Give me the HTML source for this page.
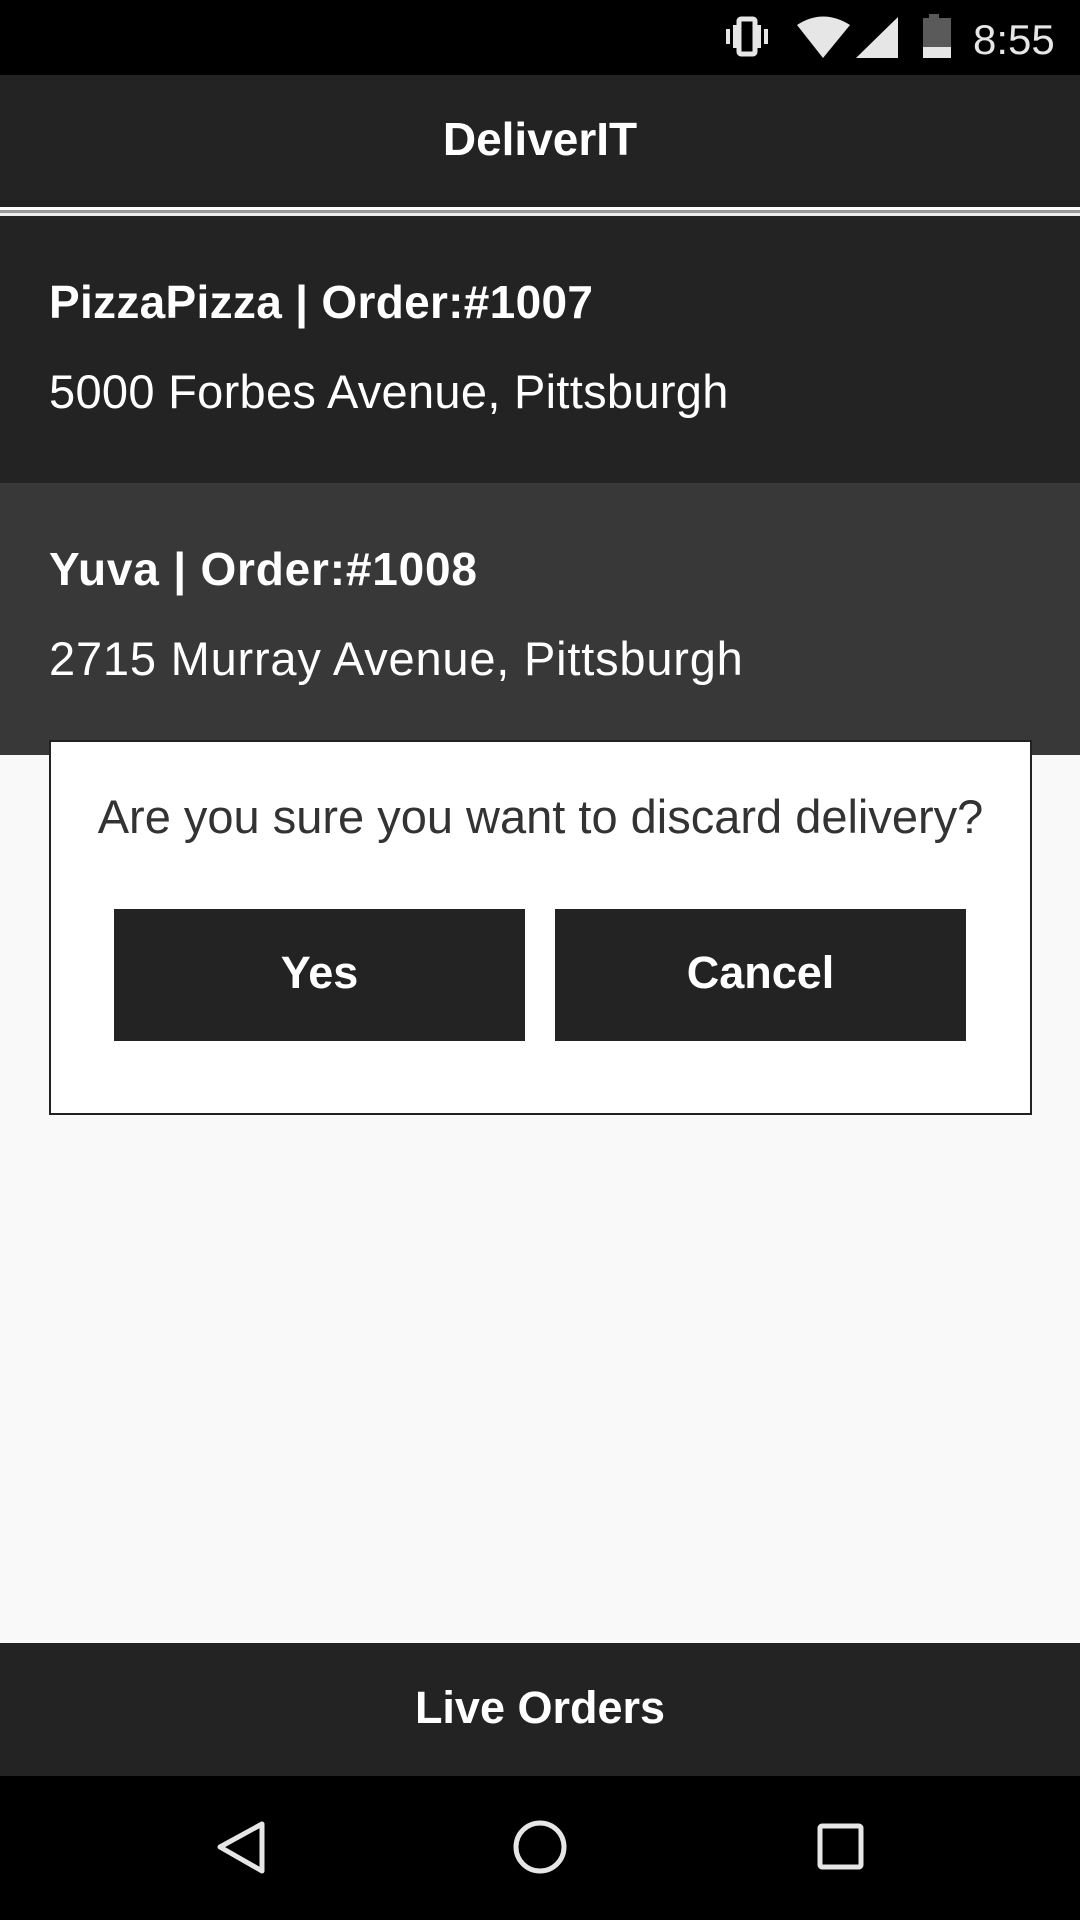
<!DOCTYPE html>
<html><head><style>
*{margin:0;padding:0;box-sizing:border-box}
body{width:1080px;height:1920px;background:#f9f9f9;font-family:"Liberation Sans",sans-serif;position:relative;overflow:hidden}
.a{position:absolute}
.t{position:absolute;white-space:nowrap;line-height:1}
</style></head><body>
<div class="a" style="left:0;top:0;width:1080px;height:75px;background:#000"></div>
<svg class="a" style="left:700px;top:0" width="380" height="75">
<rect x="39" y="19" width="16" height="35" rx="2" fill="none" stroke="#e6e6e6" stroke-width="5"/>
<rect x="26" y="29" width="4" height="15" fill="#e6e6e6"/>
<rect x="64" y="29" width="4" height="15" fill="#e6e6e6"/>
<rect x="33" y="25" width="4" height="23" fill="#e6e6e6"/>
<rect x="57" y="25" width="4" height="23" fill="#e6e6e6"/>
<path d="M97 25 Q123 8 150 25 L123 58 Z" fill="#e6e6e6"/>
<path d="M156 58 L198 17 L198 58 Z" fill="#e6e6e6"/>
<rect x="229" y="14" width="10" height="5" fill="#5a5a5a"/>
<rect x="223" y="18" width="28" height="29" fill="#5a5a5a"/>
<rect x="223" y="47" width="28" height="11" fill="#e6e6e6"/>
<text x="273" y="54" font-family="Liberation Sans" font-size="42" fill="#e6e6e6">8:55</text>
</svg>
<div class="a" style="left:0;top:75px;width:1080px;height:132px;background:#232323"></div>
<div class="t" style="left:0;width:1080px;text-align:center;top:116px;font-size:46px;font-weight:bold;color:#fff">DeliverIT</div>
<div class="a" style="left:0;top:207px;width:1080px;height:3px;background:#fff"></div>
<div class="a" style="left:0;top:210px;width:1080px;height:3px;background:#999"></div>
<div class="a" style="left:0;top:213px;width:1080px;height:3px;background:#eee"></div>
<div class="a" style="left:0;top:216px;width:1080px;height:267px;background:#232323"></div>
<div class="t" style="left:49px;top:279px;font-size:46px;font-weight:bold;color:#fff;letter-spacing:0.3px">PizzaPizza | Order:#1007</div>
<div class="t" style="left:49px;top:368px;font-size:47px;color:#fff;letter-spacing:0.3px">5000 Forbes Avenue, Pittsburgh</div>
<div class="a" style="left:0;top:483px;width:1080px;height:272px;background:#383838"></div>
<div class="t" style="left:49px;top:546px;font-size:46px;font-weight:bold;color:#fff;letter-spacing:0.8px">Yuva | Order:#1008</div>
<div class="t" style="left:49px;top:635px;font-size:47px;color:#fff;letter-spacing:0.8px">2715 Murray Avenue, Pittsburgh</div>
<div class="a" style="left:49px;top:740px;width:983px;height:375px;background:#fff;border:2px solid #222"></div>
<div class="t" style="left:49px;width:983px;text-align:center;top:793px;font-size:47px;color:#333">Are you sure you want to discard delivery?</div>
<div class="a" style="left:114px;top:909px;width:411px;height:132px;background:#232323"></div>
<div class="t" style="left:114px;width:411px;text-align:center;top:950px;font-size:45px;font-weight:bold;color:#fff">Yes</div>
<div class="a" style="left:555px;top:909px;width:411px;height:132px;background:#232323"></div>
<div class="t" style="left:555px;width:411px;text-align:center;top:950px;font-size:45px;font-weight:bold;color:#fff">Cancel</div>
<div class="a" style="left:0;top:1643px;width:1080px;height:133px;background:#232323"></div>
<div class="t" style="left:0;width:1080px;text-align:center;top:1685px;font-size:45px;font-weight:bold;color:#fff">Live Orders</div>
<div class="a" style="left:0;top:1776px;width:1080px;height:144px;background:#000"></div>
<svg class="a" style="left:0;top:1776px" width="1080" height="144">
<path d="M262 48 L220 71 L262 95 Z" fill="none" stroke="#e6e6e6" stroke-width="5" stroke-linejoin="round"/>
<circle cx="540" cy="71" r="24" fill="none" stroke="#e6e6e6" stroke-width="5"/>
<rect x="820" y="50" width="41" height="41" rx="2" fill="none" stroke="#e6e6e6" stroke-width="5"/>
</svg>
</body></html>
